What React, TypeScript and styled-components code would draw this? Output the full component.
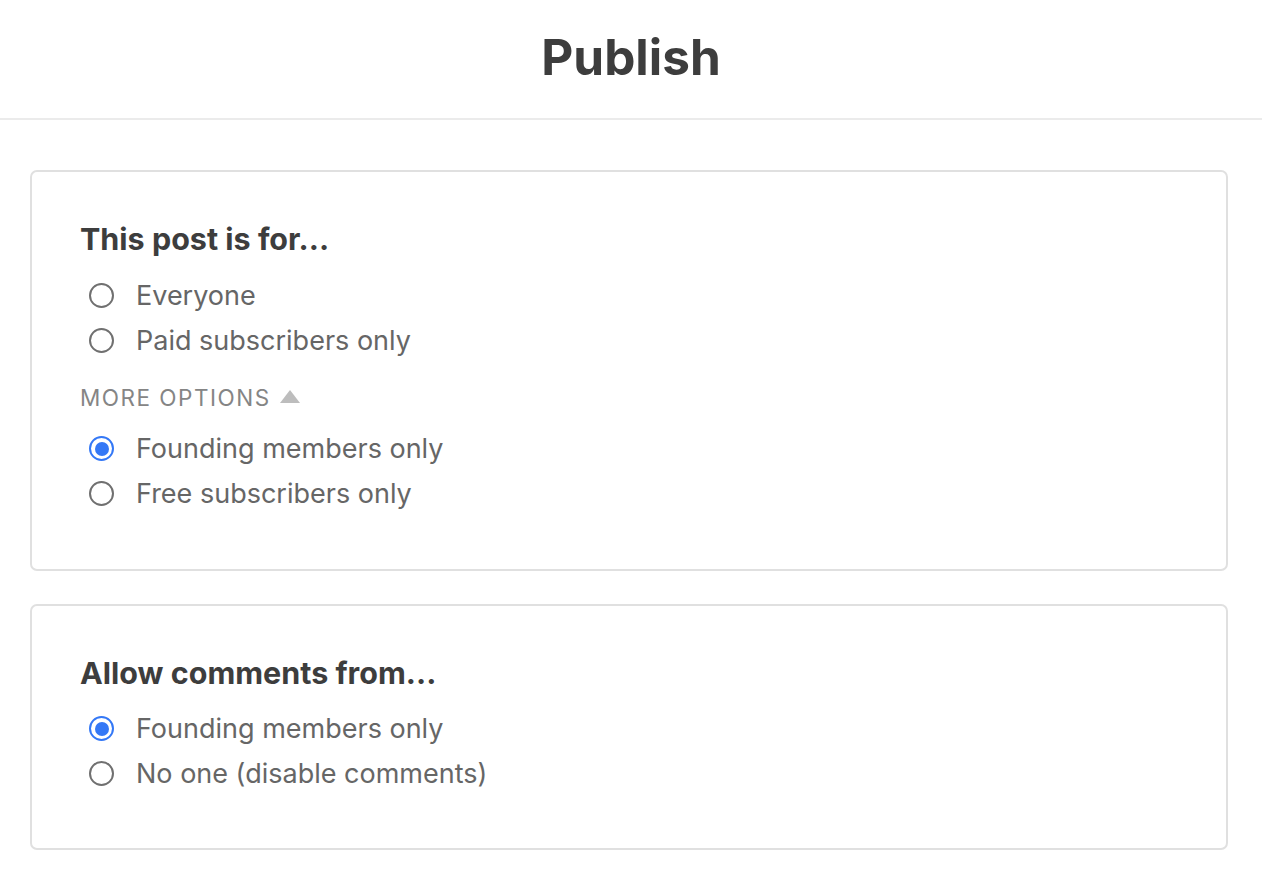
import React, { useState } from "react";
import styled, { createGlobalStyle } from "styled-components";

const GlobalStyle = createGlobalStyle`
    body {
        margin: 0;
        background: #fff;
        font-family: Inter, "Noto Sans", sans-serif;
        color: #3d3d3d;
    }
`;

const Header = styled.header`
    height: 120px;
    border-bottom: 2px solid #ebebeb;
    display: flex;
    justify-content: center;
    align-items: center;
    padding-bottom: 5px;
    box-sizing: border-box;
    & > h1 {
        margin: 0;
        font-size: 49.5px;
        font-weight: 700;
        line-height: 60px;
        color: #3d3d3d;
    }
`;

const Main = styled.main`
    display: flex;
    flex-direction: column;
    gap: 33px;
    padding: 50px 34px 20px 30px;
`;

const Card = styled.section<{ $headGap?: number; $bottom?: number }>`
    border: 2px solid #e0e0e0;
    border-radius: 7px;
    padding: 48px 48px ${(p) => p.$bottom ?? 53}px;
    & > h2 {
        margin: 0 0 ${(p) => p.$headGap ?? 15}px;
        font-size: 30.5px;
        line-height: 38px;
        font-weight: 700;
        color: #3d3d3d;
    }
`;

const OptionList = styled.div<{ $gapTop?: number }>`
    display: flex;
    flex-direction: column;
    margin-top: ${(p) => p.$gapTop ?? 0}px;
`;

const Row = styled.label`
    display: flex;
    align-items: center;
    height: 45px;
    gap: 22px;
    cursor: pointer;
    font-size: 27px;
    color: #666;
`;

const Dot = styled.span<{ $checked: boolean }>`
    box-sizing: border-box;
    width: 25px;
    height: 25px;
    margin-left: 9px;
    border-radius: 50%;
    border: 2px solid ${(p) => (p.$checked ? "#3478f6" : "#707070")};
    display: flex;
    align-items: center;
    justify-content: center;
    &::after {
        content: "";
        width: 14px;
        height: 14px;
        border-radius: 50%;
        background: ${(p) => (p.$checked ? "#3478f6" : "transparent")};
    }
`;

const MoreToggle = styled.button`
    display: flex;
    align-items: center;
    gap: 9px;
    margin-top: 19px;
    height: 30px;
    padding: 0;
    border: 0;
    background: none;
    font-family: Inter, "Noto Sans", sans-serif;
    font-size: 22.5px;
    letter-spacing: 1.5px;
    text-transform: uppercase;
    color: #858585;
    cursor: pointer;
    & > svg {
        margin-top: -2px;
    }
`;

type Opt = { id: string; label: string };

const Options = ({
    items,
    value,
    onChange,
    gapTop,
}: {
    items: Opt[];
    value: string;
    onChange: (v: string) => void;
    gapTop?: number;
}) => (
    <OptionList $gapTop={gapTop}>
        {items.map((o) => (
            <Row key={o.id} onClick={() => onChange(o.id)}>
                <Dot $checked={value === o.id} />
                {o.label}
            </Row>
        ))}
    </OptionList>
);

const App = () => {
    const [audience, setAudience] = useState("founding");
    const [comments, setComments] = useState("founding");
    const [more, setMore] = useState(true);

    return (
        <>
            <GlobalStyle />
            <Header>
                <h1>Publish</h1>
            </Header>
            <Main>
                <Card>
                    <h2>This post is for...</h2>
                    <Options
                        items={[
                            { id: "everyone", label: "Everyone" },
                            { id: "paid", label: "Paid subscribers only" },
                        ]}
                        value={audience}
                        onChange={setAudience}
                    />
                    <MoreToggle type="button" onClick={() => setMore(!more)}>
                        More options
                        <svg width="20" height="13" viewBox="0 0 20 13">
                            <path
                                d={more ? "M10 0 L20 13 L0 13 Z" : "M0 0 L20 0 L10 13 Z"}
                                fill="#bdbdbd"
                            />
                        </svg>
                    </MoreToggle>
                    {more && (
                        <Options
                            gapTop={14}
                            items={[
                                { id: "founding", label: "Founding members only" },
                                { id: "free", label: "Free subscribers only" },
                            ]}
                            value={audience}
                            onChange={setAudience}
                        />
                    )}
                </Card>
                <Card $headGap={14} $bottom={52}>
                    <h2>Allow comments from...</h2>
                    <Options
                        items={[
                            { id: "founding", label: "Founding members only" },
                            { id: "none", label: "No one (disable comments)" },
                        ]}
                        value={comments}
                        onChange={setComments}
                    />
                </Card>
            </Main>
        </>
    );
};

export default App;
